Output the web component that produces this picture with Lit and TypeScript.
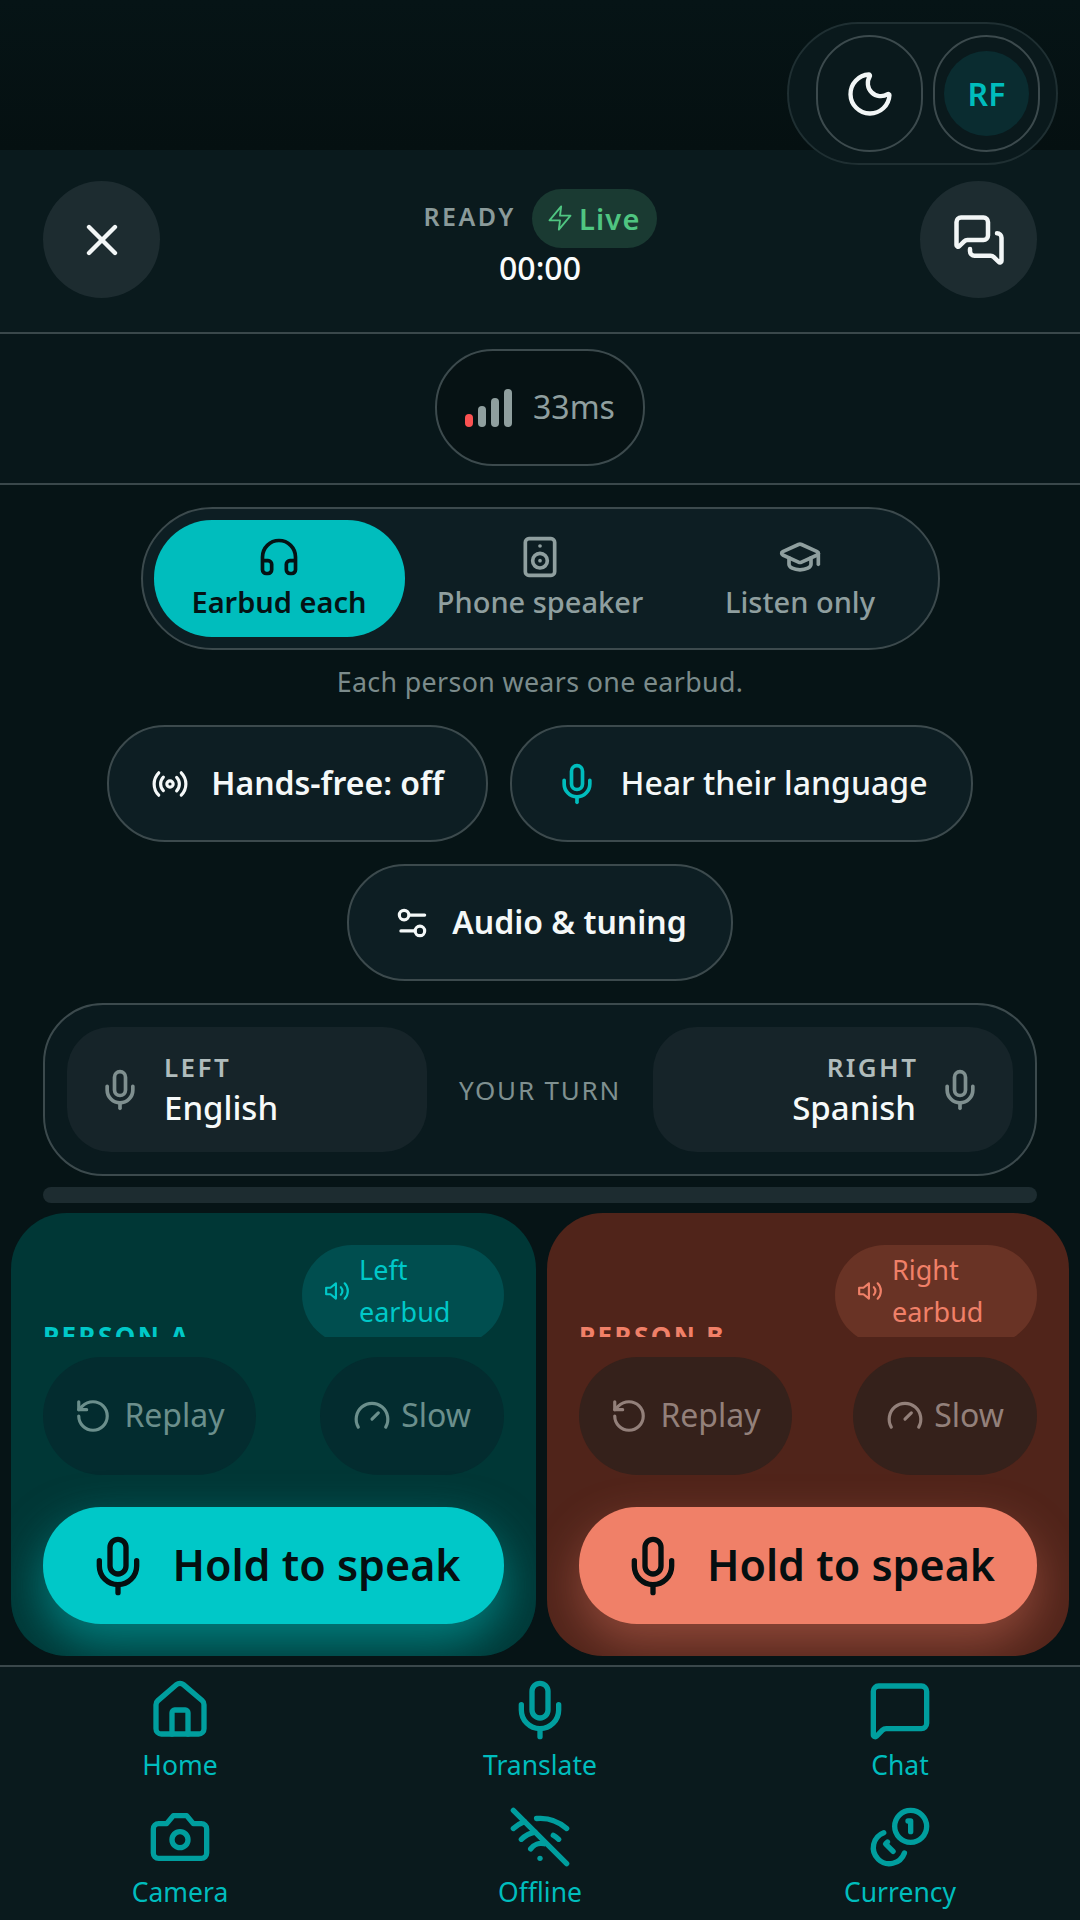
import { LitElement, html, css, svg } from "lit";
import { customElement } from "lit/decorators.js";

const paths: Record<string, any> = {
  x: svg`<path d="M18 6 6 18"/><path d="m6 6 12 12"/>`,
  moon: svg`<path d="M20.985 12.486a9 9 0 1 1-9.473-9.472c.405-.022.617.46.402.803a6 6 0 0 0 8.268 8.268c.344-.215.825-.004.803.401"/>`,
  messages: svg`<path d="M16 10a2 2 0 0 1-2 2H6.828a2 2 0 0 0-1.414.586l-2.202 2.202A.71.71 0 0 1 2 14.286V4a2 2 0 0 1 2-2h10a2 2 0 0 1 2 2z"/><path d="M20 9a2 2 0 0 1 2 2v10.286a.71.71 0 0 1-1.212.502l-2.202-2.202A2 2 0 0 0 17.172 19H10a2 2 0 0 1-2-2v-1"/>`,
  zap: svg`<path d="M13 2 3 14h9l-1 8 10-12h-9l1-8z"/>`,
  headphones: svg`<path d="M3 14h3a2 2 0 0 1 2 2v3a2 2 0 0 1-2 2H5a2 2 0 0 1-2-2v-7a9 9 0 0 1 18 0v7a2 2 0 0 1-2 2h-1a2 2 0 0 1-2-2v-3a2 2 0 0 1 2-2h3"/>`,
  speaker: svg`<rect x="4" y="2" width="16" height="20" rx="2"/><path d="M12 6h.01"/><circle cx="12" cy="14" r="4"/><path d="M12 14h.01"/>`,
  cap: svg`<path d="M21.42 10.922a1 1 0 0 0-.019-1.838L12.83 5.18a2 2 0 0 0-1.66 0L2.6 9.08a1 1 0 0 0 0 1.832l8.57 3.908a2 2 0 0 0 1.66 0z"/><path d="M22 10v6"/><path d="M6 12.5V16a6 3 0 0 0 12 0v-3.5"/>`,
  radio: svg`<path d="M4.9 19.1C1 15.2 1 8.8 4.9 4.9"/><path d="M7.8 16.2c-2.3-2.3-2.3-6.1 0-8.5"/><circle cx="12" cy="12" r="2"/><path d="M16.2 7.8c2.3 2.3 2.3 6.1 0 8.5"/><path d="M19.1 4.9C23 8.8 23 15.1 19.1 19"/>`,
  mic: svg`<path d="M12 2a3 3 0 0 0-3 3v7a3 3 0 0 0 6 0V5a3 3 0 0 0-3-3Z"/><path d="M19 10v2a7 7 0 0 1-14 0v-2"/><path d="M12 19v3"/>`,
  sliders: svg`<path d="M20 7h-9"/><path d="M14 17H5"/><circle cx="17" cy="17" r="3"/><circle cx="7" cy="7" r="3"/>`,
  volume: svg`<path d="M11 5 6 9H2v6h4l5 4V5Z"/><path d="M15.54 8.46a5 5 0 0 1 0 7.07"/><path d="M19.07 4.93a10 10 0 0 1 0 14.14"/>`,
  replay: svg`<path d="M3 12a9 9 0 1 0 9-9 9.75 9.75 0 0 0-6.74 2.74L3 8"/><path d="M3 3v5h5"/>`,
  gauge: svg`<path d="m12 14 4-4"/><path d="M3.34 19a10 10 0 1 1 17.32 0"/>`,
  home: svg`<path d="M15 21v-8a1 1 0 0 0-1-1h-4a1 1 0 0 0-1 1v8"/><path d="M3 10a2 2 0 0 1 .709-1.528l7-5.999a2 2 0 0 1 2.582 0l7 5.999A2 2 0 0 1 21 10v9a2 2 0 0 1-2 2H5a2 2 0 0 1-2-2z"/>`,
  chat: svg`<path d="M22 17a2 2 0 0 1-2 2H6.828a2 2 0 0 0-1.414.586l-2.202 2.202A.71.71 0 0 1 2 21.286V5a2 2 0 0 1 2-2h16a2 2 0 0 1 2 2z"/>`,
  camera: svg`<path d="M14.5 4h-5L7 7H4a2 2 0 0 0-2 2v9a2 2 0 0 0 2 2h16a2 2 0 0 0 2-2V9a2 2 0 0 0-2-2h-3l-2.5-3z"/><circle cx="12" cy="13" r="3"/>`,
  wifioff: svg`<path d="M12 20h.01"/><path d="M8.5 16.429a5 5 0 0 1 5.2-1.9"/><path d="M5 12.859a10 10 0 0 1 5.17-2.69"/><path d="M19 12.859a10 10 0 0 0-2.007-1.523"/><path d="M2 8.82a15 15 0 0 1 4.177-2.643"/><path d="M22 8.82a15 15 0 0 0-11.288-3.764"/><path d="m2 2 20 20"/>`,
  coins: svg`<circle cx="16" cy="8" r="6"/><path d="M5.91 10.37A6 6 0 1 0 13.66 18"/><path d="M15 6h1v4"/><path d="m7.29 13.88-.7.71 2.82 2.82"/>`,
};

function icon(name: string, size: number, cls = "") {
  return html`<svg class=${cls} width=${size} height=${size} viewBox="0 0 24 24" fill="none" stroke="currentColor" stroke-width="2" stroke-linecap="round" stroke-linejoin="round" aria-hidden="true">${paths[name]}</svg>`;
}

@customElement("app-root")
export class AppRoot extends LitElement {
  static styles = css`
    :host {
      display: block;
      position: relative;
      width: 1080px;
      height: 1920px;
      overflow: hidden;
      background: #061416;
      font-family: "Noto Sans", sans-serif;
      color: #f2f6f6;
    }
    * { box-sizing: border-box; }
    svg { display: block; flex: none; }
    .t { margin-bottom: 3px; }

    .top { height: 150px; background: linear-gradient(#061416, #051011); }
    .float {
      position: absolute; left: 787px; top: 22px; width: 271px; height: 143px;
      display: flex; align-items: center; gap: 10px; padding: 0 16px 0 27px;
      border: 2px solid #1f2f32; border-radius: 72px; background: #0a191c;
    }
    .round {
      width: 107px; height: 117px; border-radius: 54px; border: 2px solid #3c4a4d;
      display: flex; align-items: center; justify-content: center; background: #0a191c;
    }
    .avatar {
      width: 85px; height: 85px; border-radius: 50%; background: #0a2c30; color: #00bdbd;
      font-size: 32px; font-weight: 600; display: flex; align-items: center; justify-content: center;
    }

    .header {
      height: 184px; background: #0a1a1d; border-bottom: 2px solid #3a484b;
      display: flex; align-items: center; justify-content: space-between; padding: 0 43px 3px;
    }
    .circle {
      width: 117px; height: 117px; border-radius: 50%; background: #1d2c30;
      display: flex; align-items: center; justify-content: center;
    }
    .status { display: flex; flex-direction: column; align-items: center; margin-top: -3px; }
    .status-row { display: flex; align-items: center; gap: 16px; }
    .ready { font-size: 25px; font-weight: 600; letter-spacing: 2.5px; color: #8a9a9a; margin-bottom: 5px; }
    .live {
      height: 59px; padding: 0 16px 0 14px; border-radius: 30px; background: #1a3a32; color: #4fc581;
      display: flex; align-items: center; gap: 5px; font-size: 29px; font-weight: 600; letter-spacing: 1.2px;
    }
    .live svg { stroke-width: 1.6; }
    .time { font-size: 32px; font-weight: 500; line-height: 40px; color: #fafcfc; }

    .latency-row {
      height: 151px; background: #08171a; border-bottom: 2px solid #3a484b;
      display: flex; align-items: center; justify-content: center; padding-bottom: 2px;
    }
    .latency {
      width: 210px; height: 117px; border-radius: 58px; border: 2px solid #3c4a4d; background: #061214;
      display: flex; align-items: center; justify-content: center; gap: 21px; color: #8f9f9f; font-size: 32px;
    }
    .bars { display: flex; align-items: flex-end; gap: 5px; height: 38px; }
    .bars i { display: block; width: 8px; border-radius: 4px; background: #8f9f9f; }
    .bars i:first-child { background: #fb5252; }

    .controls { display: flex; flex-direction: column; align-items: center; padding-top: 22px; }
    .modes {
      width: 799px; height: 143px; border: 2px solid #3c4a4d; border-radius: 72px; background: #0d1e23;
      display: grid; grid-template-columns: 251px 271px 249px; align-items: center; padding: 0 11px;
    }
    .mode {
      height: 117px; border-radius: 58px; display: flex; flex-direction: column; align-items: center; justify-content: center;
      gap: 4px; color: #8f9f9f; font-size: 29px; font-weight: 500; line-height: 38px; padding-bottom: 1px;
    }
    .mode.on { background: #00bdbd; color: #051214; font-weight: 600; }
    .hint { margin: 14px 0 0; font-size: 26.8px; line-height: 36px; color: #7b8b8b; letter-spacing: .35px; }
    .row { display: flex; gap: 22px; margin-top: 22px; }
    .row.first { margin-top: 25px; }
    .pill {
      height: 117px; border-radius: 58px; border: 2px solid #3c4a4d; background: #0d1e23;
      display: flex; align-items: center; justify-content: center;
      font-size: 32px; font-weight: 600; color: #f4f8f8;
    }
    .pill.a { width: 381px; gap: 22px; }
    .pill.b { width: 463px; font-weight: 500; gap: 21px; }
    .pill.c { width: 386px; gap: 21px; }
    .teal { color: #00bdbd; }

    .lang {
      margin: 22px 43px 0; width: 994px; height: 173px; border: 2px solid #3c4a4d; border-radius: 60px; background: #0a1a1e;
      display: flex; align-items: center; justify-content: space-between; padding: 0 22px;
    }
    .side {
      width: 360px; height: 125px; border-radius: 44px; background: #162429;
      display: flex; align-items: center; gap: 22px; padding: 0 31px;
    }
    .side.r { justify-content: flex-end; text-align: right; }
    .side svg { color: #7f8f8f; }
    .side small { display: block; font-size: 26px; line-height: 34px; font-weight: 600; letter-spacing: 2.4px; color: #b0bcbc; margin-right: -2.4px; }
    .side b { display: block; font-size: 33px; line-height: 44px; margin-top: 2px; font-weight: 500; color: #f6fafa; }
    .turn { font-size: 26px; letter-spacing: 1.8px; color: #7f9090; }

    .bar { margin: 11px 43px 0; height: 16px; border-radius: 8px; background: #1d2c30; }

    .cards { display: flex; gap: 11px; padding: 10px 11px 0; }
    .card { height: 443px; border-radius: 56px; padding: 32px 32px 0; display: flex; flex-direction: column; overflow: hidden; }
    .card.l { width: 525px; background: #003736; color: #00c8c8; }
    .card.rr { width: 522px; background: #50241a; color: #f08068; }
    .card-head { height: 92px; overflow: hidden; display: flex; justify-content: space-between; align-items: flex-start; flex: none; }
    .who { font-size: 26px; font-weight: 700; letter-spacing: 2.4px; line-height: 30px; margin-top: 76px; }
    .chip {
      width: 202px; height: 100px; border-radius: 50px; display: flex; align-items: center; gap: 9px; padding: 0 0 8px 22px;
      font-size: 27px; line-height: 42px; flex: none;
    }
    .l .chip { background: #004e4f; }
    .rr .chip { background: #693325; }
    .tools { display: flex; justify-content: space-between; margin-top: 20px; }
    .tool {
      height: 118px; border-radius: 59px; display: flex; align-items: center; justify-content: center;
      font-size: 32px;
    }
    .tool.x { width: 213px; gap: 12px; }
    .tool.y { width: 184px; gap: 10px; }
    .l .tool { background: #032c2f; color: #6b8f8c; }
    .rr .tool { background: #35211b; color: #93807a; }
    .hold {
      margin-top: 32px; height: 117px; border-radius: 58px; display: flex; align-items: center; justify-content: center; gap: 22px;
      font-size: 43px; font-weight: 600; color: #050f10;
    }
    .hold .t { margin-bottom: 2px; }
    .l .hold { background: #00c8c8; box-shadow: 0 20px 48px rgba(0,200,200,.5); }
    .rr .hold { background: #f08068; box-shadow: 0 20px 48px rgba(240,128,104,.4); }

    nav {
      margin-top: 9px; height: 255px; border-top: 2px solid #3a484b; background: #0a1a1d;
      display: grid; grid-template-columns: repeat(3, 360px); grid-template-rows: 127px 127px; padding-top: 11px;
    }
    .tab { display: flex; flex-direction: column; align-items: center; color: #00bdbd; font-size: 26.5px; line-height: 34px; gap: 6px; }
    .tab svg { color: #009e9e; }
  `;

  private card(cls: string, who: string, side: string) {
    return html`<section class="card ${cls}">
      <div class="card-head">
        <span class="who">${who}</span>
        <span class="chip">${icon("volume", 26)}<span>${side}<br />earbud</span></span>
      </div>
      <div class="tools">
        <div class="tool x">${icon("replay", 38)}<span class="t">Replay</span></div>
        <div class="tool y">${icon("gauge", 38)}<span class="t">Slow</span></div>
      </div>
      <div class="hold">${icon("mic", 64)}<span class="t">Hold to speak</span></div>
    </section>`;
  }

  private tab(name: string, label: string) {
    return html`<div class="tab">${icon(name, 64)}<span>${label}</span></div>`;
  }

  render() {
    return html`
      <div class="top"></div>
      <div class="float">
        <div class="round">${icon("moon", 52)}</div>
        <div class="round"><div class="avatar">RF</div></div>
      </div>
      <header class="header">
        <div class="circle">${icon("x", 52)}</div>
        <div class="status">
          <div class="status-row"><span class="ready">READY</span><span class="live">${icon("zap", 28)}Live</span></div>
          <div class="time">00:00</div>
        </div>
        <div class="circle">${icon("messages", 54)}</div>
      </header>
      <div class="latency-row">
        <div class="latency">
          <span class="bars"><i style="height:13px"></i><i style="height:21px"></i><i style="height:29px"></i><i style="height:38px"></i></span>
          <span class="t">33ms</span>
        </div>
      </div>
      <div class="controls">
        <div class="modes">
          <div class="mode on">${icon("headphones", 44)}Earbud each</div>
          <div class="mode">${icon("speaker", 44)}Phone speaker</div>
          <div class="mode">${icon("cap", 44)}Listen only</div>
        </div>
        <p class="hint">Each person wears one earbud.</p>
        <div class="row first">
          <div class="pill a">${icon("radio", 38)}<span class="t">Hands-free: off</span></div>
          <div class="pill b"><span class="teal">${icon("mic", 44)}</span><span class="t">Hear their language</span></div>
        </div>
        <div class="row">
          <div class="pill c">${icon("sliders", 38)}<span class="t">Audio &amp; tuning</span></div>
        </div>
      </div>
      <div class="lang">
        <div class="side">${icon("mic", 44)}<div><small>LEFT</small><b>English</b></div></div>
        <span class="turn">YOUR TURN</span>
        <div class="side r"><div><small>RIGHT</small><b>Spanish</b></div>${icon("mic", 44)}</div>
      </div>
      <div class="bar"></div>
      <div class="cards">
        ${this.card("l", "PERSON A", "Left")}
        ${this.card("rr", "PERSON B", "Right")}
      </div>
      <nav>
        ${this.tab("home", "Home")}
        ${this.tab("mic", "Translate")}
        ${this.tab("chat", "Chat")}
        ${this.tab("camera", "Camera")}
        ${this.tab("wifioff", "Offline")}
        ${this.tab("coins", "Currency")}
      </nav>
    `;
  }
}
